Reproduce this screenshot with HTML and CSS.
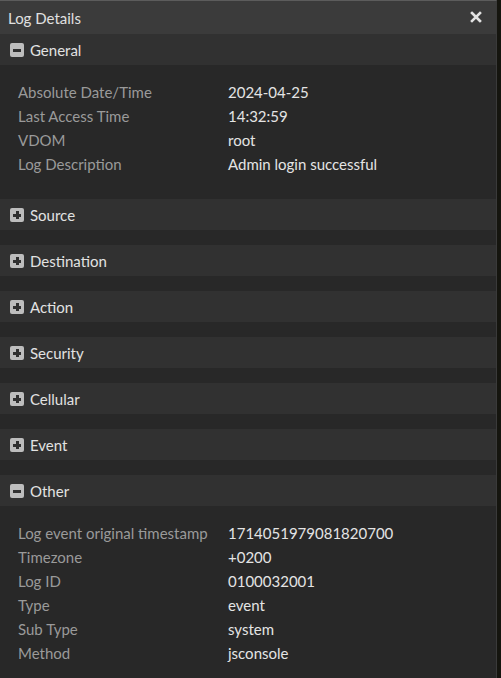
FILE: index.html
```html
<!DOCTYPE html>
<html>
<head>
<meta charset="utf-8">
<link rel="stylesheet" href="styles.css">
</head>
<body>
<div class="screen">
  <div class="panel">
    <div class="titlebar">
      <span class="title">Log Details</span>
      <svg class="close" width="12" height="12" viewBox="0 0 12 12"><path d="M2 2 L10 10 M10 2 L2 10" stroke="#e2e2e2" stroke-width="2.6" stroke-linecap="square"/></svg>
    </div>

    <div class="section">
      <div class="sec-head"><span class="tog"><span class="bar-h"></span></span><span>General</span></div>
      <div class="sec-body">
        <div class="row"><span class="lbl">Absolute Date/Time</span><span class="val">2024-04-25</span></div>
        <div class="row"><span class="lbl">Last Access Time</span><span class="val">14:32:59</span></div>
        <div class="row"><span class="lbl">VDOM</span><span class="val">root</span></div>
        <div class="row"><span class="lbl">Log Description</span><span class="val">Admin login successful</span></div>
      </div>
    </div>

    <div class="section"><div class="sec-head"><span class="tog"><span class="bar-h"></span><span class="bar-v"></span></span><span>Source</span></div></div>
    <div class="section"><div class="sec-head"><span class="tog"><span class="bar-h"></span><span class="bar-v"></span></span><span>Destination</span></div></div>
    <div class="section"><div class="sec-head"><span class="tog"><span class="bar-h"></span><span class="bar-v"></span></span><span>Action</span></div></div>
    <div class="section"><div class="sec-head"><span class="tog"><span class="bar-h"></span><span class="bar-v"></span></span><span>Security</span></div></div>
    <div class="section"><div class="sec-head"><span class="tog"><span class="bar-h"></span><span class="bar-v"></span></span><span>Cellular</span></div></div>
    <div class="section"><div class="sec-head"><span class="tog"><span class="bar-h"></span><span class="bar-v"></span></span><span>Event</span></div></div>

    <div class="section">
      <div class="sec-head"><span class="tog"><span class="bar-h"></span></span><span>Other</span></div>
      <div class="sec-body">
        <div class="row"><span class="lbl">Log event original timestamp</span><span class="val">1714051979081820700</span></div>
        <div class="row"><span class="lbl">Timezone</span><span class="val">+0200</span></div>
        <div class="row"><span class="lbl">Log ID</span><span class="val">0100032001</span></div>
        <div class="row"><span class="lbl">Type</span><span class="val">event</span></div>
        <div class="row"><span class="lbl">Sub Type</span><span class="val">system</span></div>
        <div class="row"><span class="lbl">Method</span><span class="val">jsconsole</span></div>
      </div>
    </div>
  </div>
  <div class="edge"></div>
</div>
</body>
</html>
```

FILE: styles.css
```css
html, body {
  margin: 0;
  padding: 0;
  background: #282828;
}
body {
  font-family: Lato, "Open Sans", sans-serif;
  font-size: 15px;
  width: 501px;
  height: 678px;
  overflow: hidden;
}
.screen {
  display: flex;
  width: 501px;
  height: 678px;
  overflow: hidden;
}
.panel {
  flex: 0 0 496px;
  background: #282828;
  border-top: 1px solid #5c5c5c;
  border-right: 1px solid #3a3a3a;
  display: flex;
  flex-direction: column;
  overflow: hidden;
}
.panel > * {
  flex-shrink: 0;
}
.edge {
  flex: 1;
  background: #15150f;
}
.titlebar {
  height: 33px;
  background: #3b3b3b;
  display: flex;
  align-items: center;
  justify-content: space-between;
  padding: 0 14px 0 8px;
  color: #e0e0e0;
}
.title {
  font-size: 15px;
}
.close {
  display: block;
  margin-top: -1px;
}
.section {
  margin-bottom: 15px;
}
.sec-head {
  height: 31px;
  background: #313131;
  display: flex;
  align-items: center;
  gap: 6px;
  padding-left: 10px;
  color: #e2e2e2;
  font-size: 15px;
}
.tog {
  position: relative;
  width: 14px;
  height: 14px;
  background: #bdbdbd;
  border-radius: 2px;
  margin-top: 1px;
}
.bar-h {
  position: absolute;
  left: 3px;
  top: 6px;
  width: 8px;
  height: 3px;
  background: #303030;
}
.bar-v {
  position: absolute;
  left: 6px;
  top: 3px;
  width: 3px;
  height: 8px;
  background: #303030;
}
.sec-body {
  padding: 15px 0 8px 18px;
}
.row {
  display: grid;
  grid-template-columns: 210px 1fr;
  height: 24px;
  line-height: 24px;
}
.lbl {
  color: #9a9a9a;
}
.val {
  color: #e4e4e4;
}
```
